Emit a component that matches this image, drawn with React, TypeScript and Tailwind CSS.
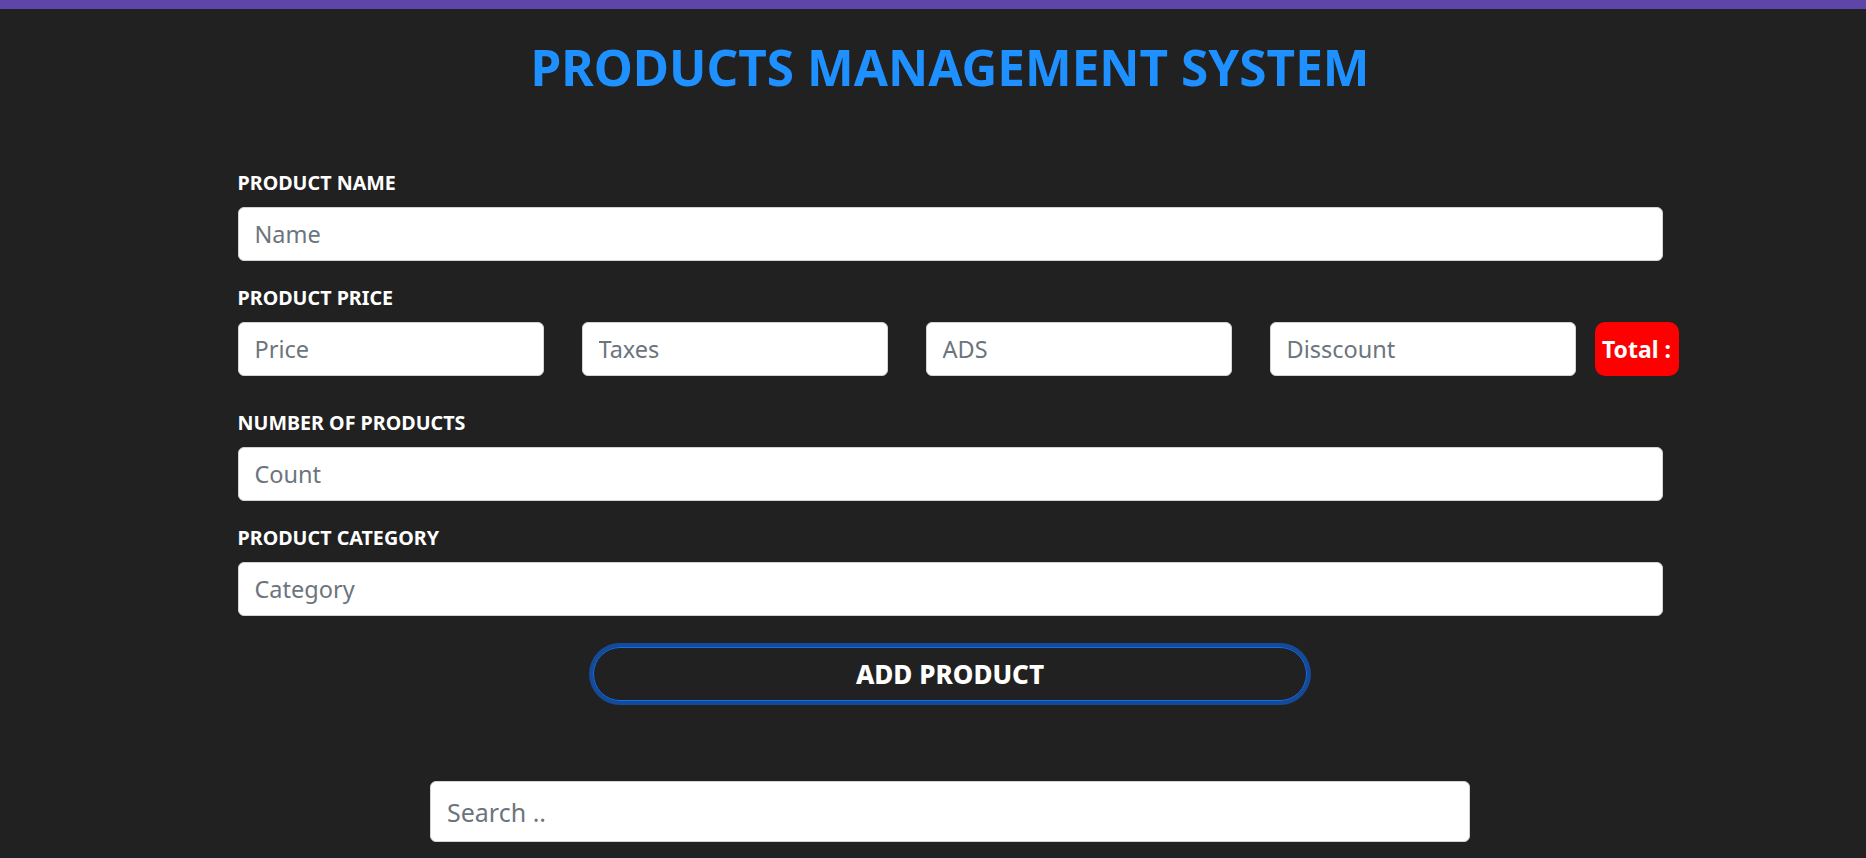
import React from "react";

const font = { fontFamily: '"Noto Sans", "Open Sans", Arial, sans-serif' };

function Label({ children }: { children: React.ReactNode }) {
  return (
    <div className="text-[19.7px] leading-[24px] font-bold text-white uppercase">{children}</div>
  );
}

function Input({ placeholder, className }: { placeholder: string; className?: string }) {
  return (
    <input
      placeholder={placeholder}
      className={
        "h-[54px] rounded-[6px] border border-[#ced4da] bg-white px-[16px] text-[23.5px] text-[#212529] placeholder:text-[#6c757d] outline-none " +
        (className ?? "")
      }
    />
  );
}

export default function App() {
  return (
    <div className="min-h-screen bg-[#212121] border-t-[9px] border-[#6045a8]" style={font}>
      <div className="pl-[34px]">
        <h1 className="pt-[26px] text-center text-[49.5px] leading-[64px] font-bold text-[#1e90ff]">
          PRODUCTS MANAGEMENT SYSTEM
        </h1>
        <div className="mx-auto w-[1425px] mt-[72px] flex flex-col">
          <Label>Product Name</Label>
          <Input placeholder="Name" className="mt-[12px] w-full" />
          <div className="mt-[25px]">
            <Label>Product Price</Label>
          </div>
          <div className="mt-[12px] flex items-center whitespace-nowrap">
            <Input placeholder="Price" className="w-[306px]" />
            <Input placeholder="Taxes" className="w-[306px] ml-[38px]" />
            <Input placeholder="ADS" className="w-[306px] ml-[38px]" />
            <Input placeholder="Disscount" className="w-[306px] ml-[38px]" />
            <div className="ml-[19px] h-[54px] w-[84px] shrink-0 rounded-[10px] bg-[#ff0000] flex items-center justify-center text-white font-bold text-[23px]">
              Total :
            </div>
          </div>
          <div className="mt-[35px]">
            <Label>Number of Products</Label>
          </div>
          <Input placeholder="Count" className="mt-[12px] w-full" />
          <div className="mt-[25px]">
            <Label>Product Category</Label>
          </div>
          <Input placeholder="Category" className="mt-[12px] w-full" />
          <button className="mx-auto mt-[31px] h-[54px] w-[714px] rounded-full border border-[#0d6efd] ring-4 ring-[#0d6efd]/55 text-white font-extrabold text-[26px] bg-transparent">
            ADD PRODUCT
          </button>
        </div>
        <div className="mx-auto w-[1040px] mt-[80px]">
          <input
            placeholder="Search .."
            className="h-[61px] w-full rounded-[6px] border border-[#ced4da] bg-white px-[16px] text-[25px] placeholder:text-[#6c757d] outline-none"
          />
        </div>
      </div>
    </div>
  );
}
